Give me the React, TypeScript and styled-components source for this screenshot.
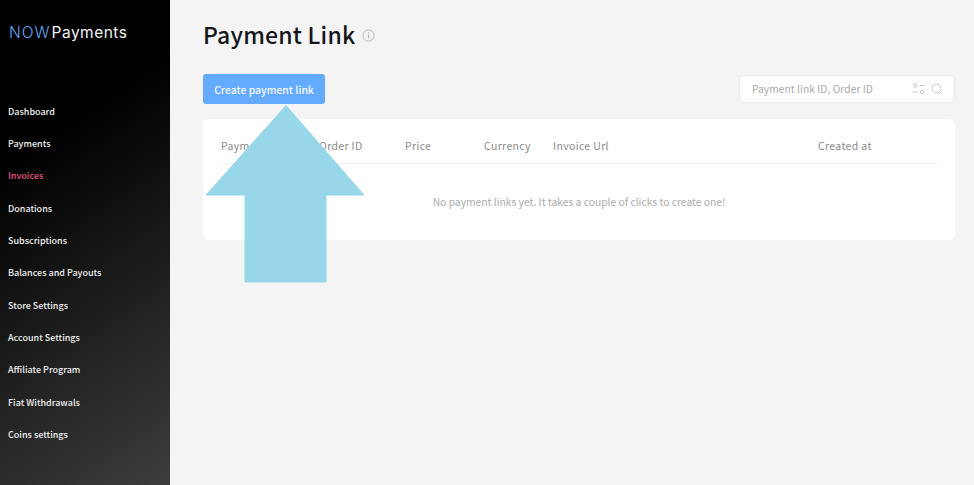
import { createGlobalStyle } from "styled-components";
import styled from "styled-components";

const Global = createGlobalStyle`
  html, body {
    margin: 0;
    padding: 0;
    height: 100%;
    background: #f4f4f4;
  }
  body {
    font-family: "Noto Sans CJK JP", "Noto Sans", sans-serif;
    overflow: hidden;
  }
`;

const Page = styled.div`
  position: relative;
  display: flex;
  width: 974px;
  height: 485px;
  overflow: hidden;
  background: #f4f4f4;
`;

const Sidebar = styled.aside`
  flex: 0 0 170px;
  height: 100%;
  box-sizing: border-box;
  padding: 23px 0 0 9px;
  background: linear-gradient(145deg, #000 28%, #3d3d3d 100%);
`;

const Logo = styled.div`
  display: flex;
  gap: 1px;
  height: 20px;
  font-family: "Inter", "Noto Sans", sans-serif;
  font-size: 15.5px;
  line-height: 20px;
  color: #f2f2f2;
  letter-spacing: 0.5px;
`;

const LogoNow = styled.span`
  color: #64a6f5;
  font-weight: 300;
  letter-spacing: 1px;
`;

const Nav = styled.nav`
  display: flex;
  flex-direction: column;
  margin-top: 58.5px;
  margin-left: -1px;
`;

const NavItem = styled.div<{ $active?: boolean }>`
  height: 32.35px;
  font-size: 9px;
  font-weight: 500;
  line-height: 20px;
  color: ${(p) => (p.$active ? "#ea5580" : "#f0f0f0")};
`;

const Main = styled.main`
  flex: 1;
  box-sizing: border-box;
  padding: 16px 19px 0 33px;
`;

const TitleRow = styled.div`
  display: flex;
  align-items: center;
  gap: 7px;
  height: 36px;
`;

const Title = styled.h1`
  margin: 0;
  font-size: 23px;
  font-weight: 500;
  line-height: 36px;
  color: #15171c;
  letter-spacing: 0.2px;
`;

const InfoIcon = styled.svg`
  margin-top: 2px;
`;

const Toolbar = styled.div`
  display: flex;
  justify-content: space-between;
  align-items: center;
  margin-top: 22px;
`;

const CreateButton = styled.button`
  width: 122px;
  height: 30px;
  padding: 0;
  border: 0;
  border-radius: 3px;
  background: #64aaff;
  color: #f7fbff;
  font-family: inherit;
  font-size: 10.4px;
  font-weight: 500;
`;

const Search = styled.div`
  display: flex;
  align-items: center;
  box-sizing: border-box;
  width: 216px;
  height: 28px;
  padding: 0 11px 1px 12px;
  border: 1px solid #e8e8e8;
  border-radius: 5px;
  background: #fff;
`;

const Placeholder = styled.span`
  flex: 1;
  font-size: 10.2px;
  color: #a9a9a9;
  letter-spacing: 0.08px;
`;

const SearchIcons = styled.div`
  display: flex;
  align-items: center;
  gap: 6px;
`;

const Card = styled.section`
  box-sizing: border-box;
  height: 121px;
  margin-top: 15px;
  padding: 0 18px;
  border-radius: 6px;
  background: #fff;
`;

const HeaderRow = styled.div`
  display: grid;
  grid-template-columns: 98px 86px 79px 69px 265px 1fr;
  align-items: center;
  height: 45px;
  padding-top: 9px;
  box-sizing: border-box;
  border-bottom: 1px solid #f0f0f0;
`;

const HeaderCell = styled.span`
  font-size: 10.5px;
  color: #8b8b8b;
  letter-spacing: 0.35px;
`;

const Empty = styled.div`
  margin-top: 29px;
  text-align: center;
  font-size: 10.3px;
  line-height: 18px;
  color: #ababab;
`;

const ArrowOverlay = styled.svg`
  position: absolute;
  left: 204px;
  top: 104px;
`;

const navItems = [
  "Dashboard",
  "Payments",
  "Invoices",
  "Donations",
  "Subscriptions",
  "Balances and Payouts",
  "Store Settings",
  "Account Settings",
  "Affiliate Program",
  "Fiat Withdrawals",
  "Coins settings",
];

const columns = ["Payment link ID", "Order ID", "Price", "Currency", "Invoice Url", "Created at"];

const App = () => {
  return (
    <Page>
      <Global />
      <Sidebar>
        <Logo>
          <LogoNow>NOW</LogoNow>
          <span>Payments</span>
        </Logo>
        <Nav>
          {navItems.map((item) => (
            <NavItem key={item} $active={item === "Invoices"}>
              {item}
            </NavItem>
          ))}
        </Nav>
      </Sidebar>
      <Main>
        <TitleRow>
          <Title>Payment Link</Title>
          <InfoIcon width="13" height="13" viewBox="0 0 13 13" fill="none" stroke="#b5b5b5">
            <circle cx="6.5" cy="6.5" r="5.6" />
            <path d="M6.5 5.6v4M6.5 3.2v1.2" strokeWidth="1.2" />
          </InfoIcon>
        </TitleRow>
        <Toolbar>
          <CreateButton>Create payment link</CreateButton>
          <Search>
            <Placeholder>Payment link ID, Order ID</Placeholder>
            <SearchIcons>
              <svg width="13" height="12" viewBox="0 0 13 12" fill="none" stroke="#c4c4c4">
                <circle cx="3" cy="2.5" r="1.7" />
                <path d="M7.5 2.5h5M0.5 9h5" />
                <circle cx="10" cy="9" r="1.7" />
              </svg>
              <svg width="12" height="12" viewBox="0 0 12 12" fill="none" stroke="#c4c4c4">
                <circle cx="5.5" cy="5.5" r="4.4" />
                <path d="M9 9l2 2" />
              </svg>
            </SearchIcons>
          </Search>
        </Toolbar>
        <Card>
          <HeaderRow>
            {columns.map((c) => (
              <HeaderCell key={c}>{c}</HeaderCell>
            ))}
          </HeaderRow>
          <Empty>No payment links yet. It takes a couple of clicks to create one!</Empty>
        </Card>
      </Main>
      <ArrowOverlay width="162" height="180" viewBox="0 0 162 180">
        <path
          d="M82 1.5 L160 91 L122 91 L122 178 L41 178 L41 91 L2 91 Z"
          fill="#98d7e9"
          stroke="#98d7e9"
          strokeWidth="1"
          strokeLinejoin="round"
        />
      </ArrowOverlay>
    </Page>
  );
};

export default App;
